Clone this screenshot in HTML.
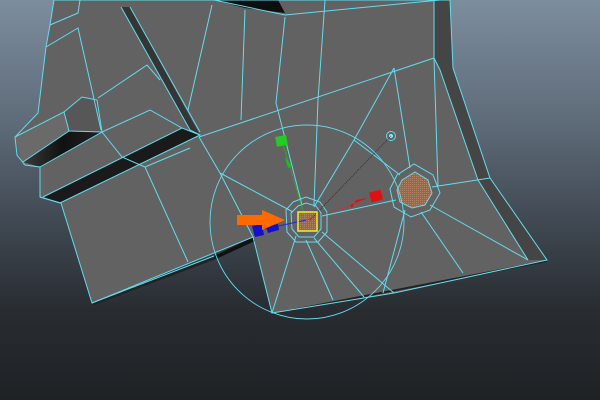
<!DOCTYPE html>
<html><head><meta charset="utf-8"><style>
html,body{margin:0;padding:0;width:600px;height:400px;overflow:hidden;background:linear-gradient(#7c8d9d 0%,#5f6c7a 30%,#3d454e 58%,#282c31 78%,#1f2225 100%);}
svg{display:block}
</style></head><body>
<svg width="600" height="400" viewBox="0 0 600 400" xmlns="http://www.w3.org/2000/svg">
<defs>
<pattern id="dots" width="2" height="2" patternUnits="userSpaceOnUse"><rect width="2" height="2" fill="#7a7068"/><rect width="1" height="1" fill="#b08466"/></pattern>
<linearGradient id="pg" x1="0" y1="0" x2="1" y2="0"><stop offset="0" stop-color="#3a3a3a"/><stop offset="0.5" stop-color="#111"/><stop offset="1" stop-color="#222"/></linearGradient>
</defs>
<polygon points="54,0 450,0 453,68 490,178 547,260 394,293 272,313 253,237 92,303 61,203 40,197 40,167 25,165 17,155 15,137 38,113 46,47 50,25" fill="#626262"/>
<polygon points="434,0 450,0 453,68 490,178 547,260 528,260 478,180 440,70 434,58" fill="#454545"/>
<polygon points="214,0 278,0 285,13 245,8" fill="#0e0e0e"/>
<polygon points="15,137 64,112 82,97 97,100 102,132 40,167 23,165" fill="#6a6a6a"/>
<polygon points="64,112 82,97 97,100 102,132 69,131" fill="#575757"/>
<polygon points="23,162 69,131 102,132 40,167" fill="url(#pg)"/>
<polygon points="121,7 130,7 200,135 190,130" fill="#353535"/>
<polygon points="43,197 182,128 200,135 60,203" fill="#1a1a1a"/>
<polygon points="214,256 253,237 255,241 216,259" fill="#111"/>
<polygon points="92,303 214,256 216,259 94,305" fill="#222"/>
<polygon points="272,313 547,260 547,262 272,315" fill="#222"/>
<polygon points="402,180 415,172 428,180 432,193 425,205 412,208 400,202 397,190" fill="url(#dots)"/>
<rect x="298" y="212" width="19" height="19" fill="url(#dots)"/>
<g fill="none" stroke="#62dcef" stroke-width="1">
<polygon points="54,0 450,0 453,68 490,178 547,260 394,293 272,313 253,237 92,303 61,203 40,197 40,167 25,165 17,155 15,137 38,113 46,47 50,25"/>
<polyline points="434,0 434,58 440,70 478,180 528,260"/>
<polyline points="15,137 64,112 82,97 97,100 102,132 40,167"/>
<polyline points="64,112 69,131 102,132"/>
<polyline points="23,162 69,131"/>
<polyline points="102,132 150,110 182,128"/>
<polyline points="199,137 434,58"/>
<polyline points="43,197 182,128 200,135 60,203"/>
<polyline points="40,197 60,203"/>
<polyline points="121,7 190,130 200,135"/>
<polyline points="130,7 200,132"/>
<polyline points="46,47 78,28 101,130"/>
<polyline points="50,25 78,13 80,0"/>
<polyline points="98,98 147,65 160,80"/>
<polyline points="102,132 122,157 145,167 188,262"/>
<polyline points="145,167 190,148"/>
<polyline points="212,5 188,110"/>
<polyline points="245,10 241,120"/>
<polyline points="285,17 276,103 302,205"/>
<polyline points="214,0 285,15 440,0"/>
<polyline points="325,0 318,100 314,205"/>
<polyline points="394,68 354,140 314,207"/>
<polyline points="394,68 410,168"/>
<polyline points="354,140 400,175"/>
<polyline points="434,58 438,186"/>
<polyline points="199,137 220,173 253,237"/>
<polyline points="220,173 293,212"/>
<polyline points="296,236 272,313"/>
<polyline points="306,240 333,300"/>
<polyline points="314,238 364,297"/>
<polyline points="322,232 394,293"/>
<polyline points="322,216 396,200"/>
<polyline points="432,187 490,178"/>
<polyline points="430,205 528,260"/>
<polyline points="421,212 463,273"/>
<polyline points="405,210 383,293"/>
<polyline points="92,303 214,256"/>
<polygon points="298,206 306,203 316,206 321,213 321,229 314,237 299,237 292,229 291,213"/>
<polygon points="293,202 306,197 320,202 327,212 327,232 318,242 296,242 287,232 286,210"/>
<polygon points="402,180 415,172 428,180 432,193 425,205 412,208 400,202 397,190"/>
<polygon points="397,175 414,164 433,175 440,193 430,210 411,217 394,207 390,189"/>
<circle cx="307" cy="222" r="97" stroke-width="0.9"/>
<circle cx="391" cy="136" r="4.5"/>
</g>
<circle cx="391" cy="136" r="2" fill="#8ef"/>
<line x1="310" y1="220" x2="391" y2="136" stroke="#333" stroke-dasharray="1 1"/>
<line x1="306" y1="220" x2="283" y2="144" stroke="#2c2" stroke-dasharray="1 1"/>
<rect x="276" y="136" width="11" height="10" fill="#2c2" transform="rotate(-10 281 141)"/>
<polygon points="285,157 288,168 292,166" fill="#2b2"/>
<line x1="306" y1="220" x2="378" y2="197" stroke="#e22" stroke-dasharray="1 1"/>
<polygon points="350,205 368,198 356,200 352,208" fill="#d11"/>
<rect x="370" y="191" width="12" height="10" fill="#d11" transform="rotate(-15 376 196)"/>
<line x1="306" y1="220" x2="265" y2="229" stroke="#22e"/>
<polygon points="252,226 262,224 264,235 255,237" fill="#11c"/>
<polygon points="266,226 278,224 279,230 268,233" fill="#11c"/>
<rect x="298" y="212" width="19" height="19" fill="none" stroke="#ee2" stroke-width="1.5"/>
<polygon points="237,215 262,215 262,210 285,220 262,230 262,225 237,225" fill="#ff6a00"/>
</svg>
</body></html>
